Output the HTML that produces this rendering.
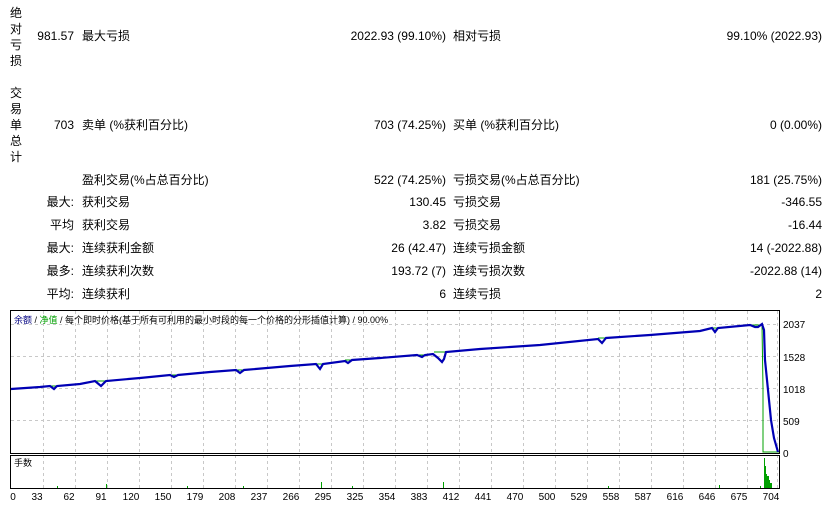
<!DOCTYPE html>
<html><head><meta charset="utf-8"><style>
body{margin:0;width:827px;height:512px;background:#fff;font-family:"Liberation Sans","Noto Sans CJK SC",sans-serif;font-size:12px;color:#000;position:relative;overflow:hidden}
.t{position:absolute;white-space:nowrap;line-height:14px}
.r{text-align:right}
.v{position:absolute;left:10px;width:12px;line-height:16px;font-size:12px}
</style></head><body>
<div class="v" style="top:5px">绝<br>对<br>亏<br>损</div>
<div class="v" style="top:85px">交<br>易<br>单<br>总<br>计</div>

<div class="t r" style="right:753px;top:29px">981.57</div>
<div class="t" style="left:82px;top:29px">最大亏损</div>
<div class="t r" style="right:381px;top:29px">2022.93 (99.10%)</div>
<div class="t" style="left:453px;top:29px">相对亏损</div>
<div class="t r" style="right:5px;top:29px">99.10% (2022.93)</div>

<div class="t r" style="right:753px;top:118px">703</div>
<div class="t" style="left:82px;top:118px">卖单 (%获利百分比)</div>
<div class="t r" style="right:381px;top:118px">703 (74.25%)</div>
<div class="t" style="left:453px;top:118px">买单 (%获利百分比)</div>
<div class="t r" style="right:5px;top:118px">0 (0.00%)</div>

<div class="t" style="left:82px;top:173px">盈利交易(%占总百分比)</div>
<div class="t r" style="right:381px;top:173px">522 (74.25%)</div>
<div class="t" style="left:453px;top:173px">亏损交易(%占总百分比)</div>
<div class="t r" style="right:5px;top:173px">181 (25.75%)</div>

<div class="t r" style="right:753px;top:195px">最大:</div>
<div class="t" style="left:82px;top:195px">获利交易</div>
<div class="t r" style="right:381px;top:195px">130.45</div>
<div class="t" style="left:453px;top:195px">亏损交易</div>
<div class="t r" style="right:5px;top:195px">-346.55</div>

<div class="t r" style="right:753px;top:218px">平均</div>
<div class="t" style="left:82px;top:218px">获利交易</div>
<div class="t r" style="right:381px;top:218px">3.82</div>
<div class="t" style="left:453px;top:218px">亏损交易</div>
<div class="t r" style="right:5px;top:218px">-16.44</div>

<div class="t r" style="right:753px;top:241px">最大:</div>
<div class="t" style="left:82px;top:241px">连续获利金额</div>
<div class="t r" style="right:381px;top:241px">26 (42.47)</div>
<div class="t" style="left:453px;top:241px">连续亏损金额</div>
<div class="t r" style="right:5px;top:241px">14 (-2022.88)</div>

<div class="t r" style="right:753px;top:264px">最多:</div>
<div class="t" style="left:82px;top:264px">连续获利次数</div>
<div class="t r" style="right:381px;top:264px">193.72 (7)</div>
<div class="t" style="left:453px;top:264px">连续亏损次数</div>
<div class="t r" style="right:5px;top:264px">-2022.88 (14)</div>

<div class="t r" style="right:753px;top:287px">平均:</div>
<div class="t" style="left:82px;top:287px">连续获利</div>
<div class="t r" style="right:381px;top:287px">6</div>
<div class="t" style="left:453px;top:287px">连续亏损</div>
<div class="t r" style="right:5px;top:287px">2</div>

<svg width="827" height="512" style="position:absolute;left:0;top:0" xmlns="http://www.w3.org/2000/svg">
<g stroke="#c8c8c8" stroke-dasharray="3,3" stroke-width="1">
<line x1="11" y1="324.5" x2="779" y2="324.5"/><line x1="11" y1="356.5" x2="779" y2="356.5"/><line x1="11" y1="388.5" x2="779" y2="388.5"/><line x1="11" y1="420.5" x2="779" y2="420.5"/>
<path d="M43.5 311V488M75.5 311V488M107.5 311V488M139.5 311V488M171.5 311V488M203.5 311V488M235.5 311V488M267.5 311V488M299.5 311V488M331.5 311V488M363.5 311V488M395.5 311V488M427.5 311V488M459.5 311V488M491.5 311V488M523.5 311V488M555.5 311V488M587.5 311V488M619.5 311V488M651.5 311V488M683.5 311V488M715.5 311V488M747.5 311V488M777.5 311V488"/>
</g>
<rect x="10.5" y="310.5" width="769" height="143" fill="none" stroke="#000"/>
<rect x="10.5" y="455.5" width="769" height="33" fill="none" stroke="#000"/>
<g stroke="#00a000" stroke-width="1" fill="none">
<path d="M49 386H57M95 381H107M170 375H178M236 370H243M316 364H323M345 360H353M417 355H425M434 352H447M598 338H606M712 328H718M750 325H762L763 388V452H779"/>
</g>
<path fill="none" stroke="#0000b4" stroke-width="2.2" d="M11 389L40 387L50 386L54 389L57 386L80 384L95 381L101 386L106 381L140 378L170 375L174 377L178 375L210 372L236 370L240 373L244 370L290 366L316 364L320 369L323 364L345 361L348 363L352 360L380 358L417 355L422 357L425 355L433 354L438 358L442 362L444 359L446 352L480 349L540 345L598 339L602 343L606 338L650 335L700 331L712 328L715 332L718 328L750 325L755 327L758 327L762 324L764 330L765 360L767 380L769 400L771 420L774 438L778 452"/>
<g fill="#00a000">
<rect x="57" y="486" width="1" height="2"/><rect x="106" y="484" width="1" height="4"/><rect x="187" y="486" width="1" height="2"/><rect x="243" y="486" width="1" height="2"/><rect x="321" y="482" width="1" height="6"/><rect x="352" y="486" width="1" height="2"/><rect x="443" y="482" width="1" height="6"/><rect x="608" y="486" width="1" height="2"/><rect x="719" y="485" width="1" height="3"/><rect x="760" y="486" width="1" height="2"/>
<rect x="764" y="458" width="1" height="30"/><rect x="765" y="466" width="1" height="22"/><rect x="766" y="474" width="1" height="14"/><rect x="767" y="476" width="2" height="12"/><rect x="769" y="480" width="1" height="8"/><rect x="770" y="483" width="2" height="5"/>
</g>
<g font-family="Liberation Sans, Noto Sans CJK SC, sans-serif" font-size="10" fill="#000">
<text x="783" y="328">2037</text><text x="783" y="361">1528</text><text x="783" y="393">1018</text><text x="783" y="425">509</text><text x="783" y="457">0</text>
<text x="14" y="466" font-size="9">手数</text>
<text x="14" y="323" font-size="9"><tspan fill="#000080">余额</tspan> / <tspan fill="#00a000">净值</tspan> / 每个即时价格(基于所有可利用的最小时段的每一个价格的分形插值计算) / 90.00%</text>
</g>
<g font-family="Liberation Sans, sans-serif" font-size="10" fill="#000" text-anchor="middle">
<text x="13" y="500">0</text><text x="37" y="500">33</text><text x="69" y="500">62</text><text x="101" y="500">91</text><text x="131" y="500">120</text><text x="163" y="500">150</text><text x="195" y="500">179</text><text x="227" y="500">208</text><text x="259" y="500">237</text><text x="291" y="500">266</text><text x="323" y="500">295</text><text x="355" y="500">325</text><text x="387" y="500">354</text><text x="419" y="500">383</text><text x="451" y="500">412</text><text x="483" y="500">441</text><text x="515" y="500">470</text><text x="547" y="500">500</text><text x="579" y="500">529</text><text x="611" y="500">558</text><text x="643" y="500">587</text><text x="675" y="500">616</text><text x="707" y="500">646</text><text x="739" y="500">675</text><text x="771" y="500">704</text>
</g>
</svg>
</body></html>
